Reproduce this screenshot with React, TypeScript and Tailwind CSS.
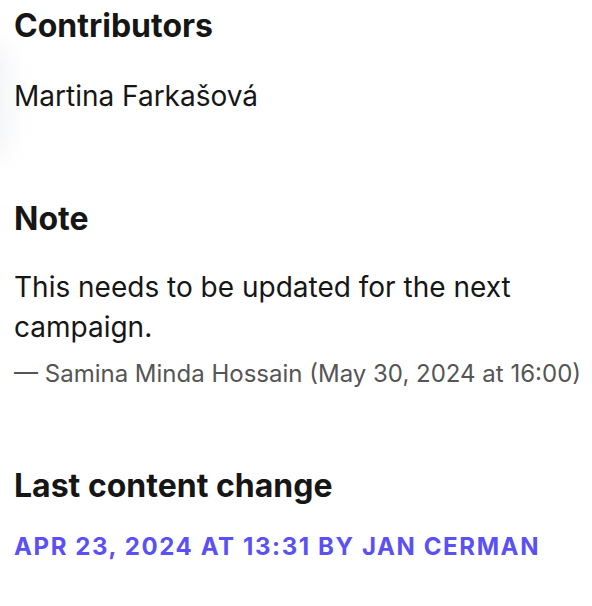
export default function App() {
  return (
    <div className="relative min-h-[606px] w-[592px] overflow-hidden bg-white font-['Inter',sans-serif] text-[#161616]">
      <div className="pointer-events-none absolute left-[-40px] top-[40px] h-[120px] w-[50px] rounded-full bg-[#f3f4f6] blur-[12px]" />
      <div className="relative pl-[14px] pr-[4px] pt-[6px]">
        <h2 className="text-[32px] font-bold leading-[40px]">Contributors</h2>
        <p className="mt-[30px] text-[28px] leading-[40px]">Martina Farkašová</p>

        <h2 className="mt-[83px] text-[32px] font-bold leading-[40px]">Note</h2>
        <p className="mt-[28px] w-[560px] text-[28px] leading-[40px]">This needs to be updated for the next campaign.</p>
        <p className="mt-[11px] text-[24px] leading-[32px] text-[#555]">— Samina Minda Hossain (May 30, 2024 at 16:00)</p>

        <h2 className="mt-[76px] text-[32px] font-bold leading-[40px]">Last content change</h2>
        <p className="mt-[25px] text-[24px] font-bold uppercase leading-[32px] tracking-[1.6px] text-[#5b50f5]">Apr 23, 2024 at 13:31 by Jan Cerman</p>
      </div>
    </div>
  );
}
